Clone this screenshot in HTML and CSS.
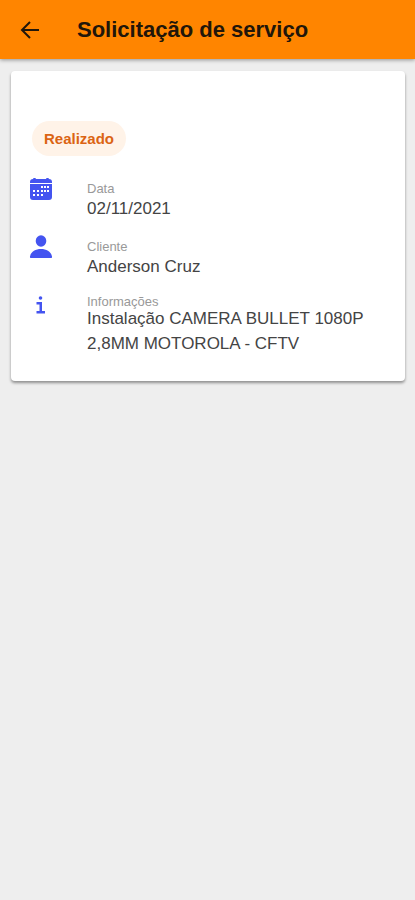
FILE: index.html
```
<!DOCTYPE html>
<html lang="pt-BR">
  <head>
    <meta charset="utf-8">
    <meta name="viewport" content="width=device-width, initial-scale=1">
    <title>Solicitação de serviço</title>
    <link rel="stylesheet" href="styles.css">
  </head>
  <body>
    <header class="toolbar">
      <button class="back" type="button" aria-label="Voltar">
        <svg viewBox="0 0 20 20" width="20" height="20">
          <path d="M19 10H2M10 2L2 10l8 8" />
        </svg>
      </button>
      <h1>Solicitação de serviço</h1>
    </header>

    <main class="card">
      <span class="badge">Realizado</span>

      <dl class="details">
        <div class="item">
          <svg class="icon" viewBox="0 0 24 24" width="24" height="24">
            <path d="M4 2c0-1.300 3-1.300 3 0h10c0-1.300 3-1.300 3 0 2 0 3 1 3 3v1H1V5c0-2 1-3 3-3z" />
            <path fill-rule="evenodd" d="M1 7h22v13a3 3 0 0 1-3 3H4a3 3 0 0 1-3-3zM12 9v2h2V9zM15 9v2h2V9zM18 9v2h2V9zM4 13v2h2v-2zM8 13v2h2v-2zM12 13v2h2v-2zM15 13v2h2v-2zM18 13v2h2v-2zM4 17v2h2v-2zM8 17v2h2v-2zM12 17v2h2v-2z" />
          </svg>
          <dt>Data</dt>
          <dd>02/11/2021</dd>
        </div>

        <div class="item">
          <svg class="icon" viewBox="0 0 24 24" width="24" height="24">
            <ellipse cx="12" cy="6" rx="5.300" ry="5.800" />
            <path d="M2 23c-.8 0-1.200-.7-1-1.500C2 16.500 6.500 14 12 14s10 2.500 11 7.500c.2.8-.2 1.500-1 1.500z" />
          </svg>
          <dt>Cliente</dt>
          <dd>Anderson Cruz</dd>
        </div>

        <div class="item info">
          <svg class="icon" viewBox="0 0 24 24" width="24" height="24">
            <circle cx="11.500" cy="5" r="1.800" />
            <path d="M7.500 9H13v9h3v2.500H7.500V18h3v-6.500h-3z" />
          </svg>
          <dt>Informações</dt>
          <dd>Instalação CAMERA BULLET 1080P 2,8MM MOTOROLA - CFTV</dd>
        </div>
      </dl>
    </main>
  </body>
</html>
```
FILE: styles.css
```
body {
    font-family: "Liberation Sans", Arial, sans-serif;
    background-color: #eee;
    margin: 0;
    min-height: 100vh;
}

/* Top bar */
.toolbar {
    display: flex;
    align-items: center;
    gap: 37px;
    height: 59px;
    padding: 0 20px;
    background-color: #ff8500;
    box-shadow: 0 1px 4px rgba(0, 0, 0, 0.4);
}

.back {
    display: flex;
    padding: 0;
    border: 0;
    background: none;
    cursor: pointer;
}

.back svg {
    fill: none;
    stroke: #21160a;
    stroke-width: 2;
}

h1 {
    margin: 0;
    font-size: 22px;
    line-height: 28px;
    color: #21160a;
}

/* Service card */
.card {
    margin: 12px 10px 0 11px;
    padding: 50px 22px 25px 18px;
    background-color: #fff;
    border-radius: 4px;
    box-shadow: 0 2px 3px rgba(0, 0, 0, 0.4);
}

.badge {
    display: inline-block;
    margin-left: 3px;
    padding: 0 12px;
    border-radius: 18px;
    background-color: #fff3e8;
    color: #db6413;
    font-size: 15px;
    font-weight: bold;
    line-height: 35px;
}

.details {
    margin: 21px 0 0;
}

.item {
    display: grid;
    grid-template-columns: 24px 1fr;
    column-gap: 34px;
    margin-bottom: 14px;
}

.icon {
    grid-row: 1 / 3;
    fill: #4454f0;
}

dt {
    padding-top: 4px;
    color: #999;
    font-size: 13px;
    line-height: 16px;
}

dd {
    margin: 0;
    color: #444;
    font-size: 17px;
    line-height: 24px;
}

.info {
    margin-bottom: 0;
}

/* the label sits tight on the two-line text */
.info dt {
    padding-top: 1px;
    margin-bottom: -4px;
}

.info dd {
    line-height: 25px;
}
```
